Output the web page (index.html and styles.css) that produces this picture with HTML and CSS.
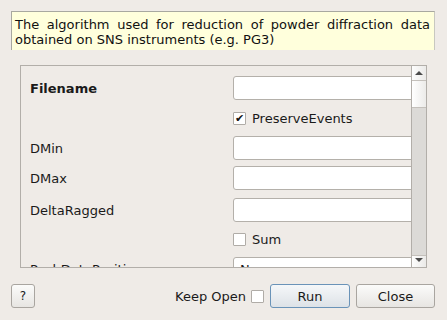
FILE: index.html
```html
<!DOCTYPE html>
<html lang="en">
  <head>
    <meta charset="UTF-8" />
    <title>SNSPowderReduction</title>
    <link rel="stylesheet" href="styles.css">
  </head>
  <body>
    <div class="tip">
      The algorithm used for reduction of powder diffraction data obtained on SNS instruments (e.g. PG3)
    </div>

    <div class="panel">
      <div class="fields">
        <div class="row">
          <label class="name bold">Filename</label>
          <div class="value"><input type="text" /></div>
        </div>
        <div class="row">
          <span class="name"></span>
          <div class="value"><span class="check">&#10004;</span> PreserveEvents</div>
        </div>
        <div class="row">
          <label class="name">DMin</label>
          <div class="value"><input type="text" /></div>
        </div>
        <div class="row">
          <label class="name">DMax</label>
          <div class="value"><input type="text" /></div>
        </div>
        <div class="row wide">
          <label class="name">DeltaRagged</label>
          <div class="value"><input type="text" /></div>
        </div>
        <div class="row tight">
          <span class="name"></span>
          <div class="value"><span class="check"></span> Sum</div>
        </div>
        <div class="row">
          <label class="name">PushDataPositive</label>
          <div class="value"><div class="combo">None</div></div>
        </div>
      </div>
      <div class="scrollbar">
        <div class="sb-btn sb-up"><span class="arrow-up"></span></div>
        <div class="sb-handle"></div>
        <div class="sb-track"></div>
        <div class="sb-btn sb-down"><span class="arrow-down"></span></div>
      </div>
    </div>

    <div class="buttons">
      <button class="btn help">?</button>
      <div class="spacer"></div>
      <span class="keep">Keep Open</span>
      <span class="check"></span>
      <button class="btn run">Run</button>
      <button class="btn close">Close</button>
    </div>
  </body>
</html>
```

FILE: styles.css
```css
body {
  margin: 0;
  background: #efebe7;
  font-family: 'DejaVu Sans', sans-serif;
  font-size: 13px;
  color: #1a1a1a;
  width: 447px;
  height: 320px;
  overflow: hidden;
}
.tip {
  margin: 11px 12px 0 11px;
  height: 39px;
  box-sizing: border-box;
  padding: 5px 4px 0 3px;
  background: #ffffdc;
  border-top: 1px solid #a8a8a0;
  border-left: 1px solid #a8a8a0;
  border-right: 1px solid #c8c8c0;
  line-height: 15px;
  text-align: justify;
  color: #111;
}
.panel {
  margin: 15px 20px 0 20px;
  height: 203px;
  box-sizing: border-box;
  border: 1px solid #b2aea9;
  display: flex;
}
.fields {
  flex: 1;
  overflow: hidden;
  display: flex;
  flex-direction: column;
  gap: 6px;
  padding: 10px 0 0 9px;
}
.row {
  display: flex;
  height: 24px;
  flex-shrink: 0;
}
.row.wide {
  margin-top: 2px;
}
.row.tight {
  margin-top: -1px;
}
.name {
  width: 203px;
  flex-shrink: 0;
  display: flex;
  align-items: center;
}
.bold {
  font-weight: bold;
}
.value {
  display: flex;
  align-items: center;
  gap: 6px;
  white-space: nowrap;
}
input,
.combo {
  width: 200px;
  height: 24px;
  box-sizing: border-box;
  border: 1px solid #b4b0aa;
  border-radius: 3px;
  background: #fff;
  font: inherit;
  padding: 0 4px;
}
.combo {
  display: flex;
  align-items: center;
  padding-left: 6px;
}
.check {
  width: 13px;
  height: 13px;
  box-sizing: border-box;
  border: 1px solid #b0aca7;
  border-radius: 1px;
  background: #fff;
  display: inline-flex;
  align-items: center;
  justify-content: center;
  font-size: 11px;
  line-height: 1;
  color: #111;
}
.scrollbar {
  width: 14px;
  border-left: 1px solid #b2aea9;
  background: #dcdad7;
  display: flex;
  flex-direction: column;
}
.sb-btn {
  background: linear-gradient(to right, #fdfdfd, #ebeae8);
  display: flex;
  align-items: center;
  justify-content: center;
}
.sb-up {
  height: 14px;
  border-bottom: 1px solid #c4c0bb;
}
.sb-down {
  height: 9px;
  border-top: 1px solid #c4c0bb;
  align-items: flex-start;
  padding-top: 2px;
}
.sb-handle {
  height: 26px;
  background: linear-gradient(to right, #ffffff, #ecebe9);
  border-bottom: 1px solid #c4c0bb;
}
.sb-track {
  flex: 1;
}
.arrow-up {
  width: 0;
  height: 0;
  border-left: 4px solid transparent;
  border-right: 4px solid transparent;
  border-bottom: 4px solid #4a4a4a;
}
.arrow-down {
  width: 0;
  height: 0;
  border-left: 4px solid transparent;
  border-right: 4px solid transparent;
  border-top: 4px solid #4a4a4a;
}
.buttons {
  display: flex;
  align-items: center;
  margin: 16px 12px 0 11px;
  height: 24px;
}
.spacer {
  flex: 1;
}
.btn {
  height: 24px;
  box-sizing: border-box;
  border: 1px solid #a9a5a0;
  border-radius: 3px;
  background: linear-gradient(#fbfbfa, #e7e5e2);
  font: inherit;
  color: #1a1a1a;
  padding: 0;
}
.help {
  width: 24px;
  font-size: 12px;
}
.keep {
  margin-right: 5px;
}
.run {
  width: 80px;
  margin-left: 6px;
  border-color: #6a93b8;
  background: linear-gradient(#f5f7f9, #dde2e7);
}
.close {
  width: 79px;
  margin-left: 6px;
}
```
